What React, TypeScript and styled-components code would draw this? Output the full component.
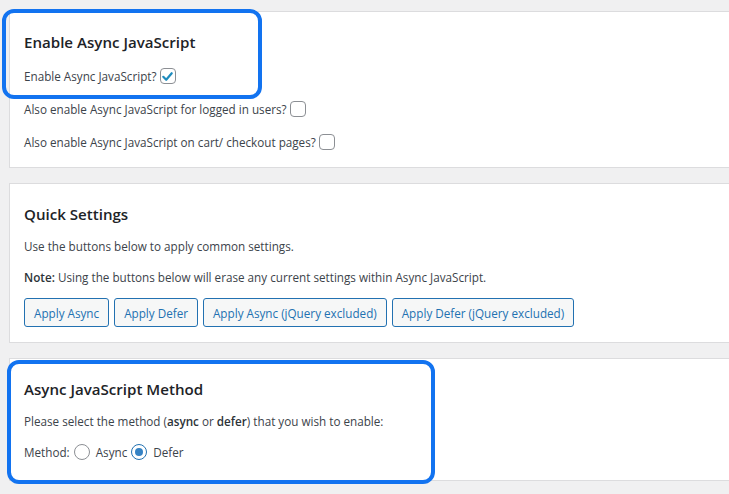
import React from "react";
import styled, { createGlobalStyle } from "styled-components";

const GlobalStyle = createGlobalStyle`
  html, body {
    margin: 0;
    padding: 0;
    background: #f0f0f1;
  }
  body {
    font-family: "Open Sans", "Noto Sans", sans-serif;
    color: #3c434a;
  }
`;

const Page = styled.div`
  padding: 11px 0 0 9px;
  display: flex;
  flex-direction: column;
  gap: 15px;
  overflow: hidden;
  min-height: 494px;
  box-sizing: border-box;
`;

const Panel = styled.section<{ $gap: number; $bottom: number }>`
  position: relative;
  background: #fff;
  border: 1px solid #dcdcde;
  border-right: none;
  padding: 19px 0 ${(p) => p.$bottom}px 14px;
  display: flex;
  flex-direction: column;
  gap: ${(p) => p.$gap}px;
`;

const Title = styled.h2`
  margin: 0;
  font-size: 15.1px;
  line-height: 22px;
  font-weight: 600;
  color: #1d2327;
`;

const Text = styled.p`
  margin: 0;
  font-size: 11.7px;
  line-height: 20px;
  white-space: nowrap;
  b {
    font-weight: 600;
    color: #2c3338;
  }
`;

const Row = styled.label`
  display: flex;
  align-items: center;
  font-size: 11.7px;
  line-height: 20px;
  white-space: nowrap;
`;

const Box = styled.span`
  width: 16px;
  height: 16px;
  margin-left: 3px;
  border: 1px solid #8c8f94;
  border-radius: 4px;
  box-sizing: border-box;
  display: inline-flex;
  align-items: center;
  justify-content: center;
  svg {
    width: 13px;
    height: 13px;
  }
`;

const Radio = styled.span<{ $checked?: boolean }>`
  width: 16px;
  height: 16px;
  margin: 0 6px 0 4px;
  border: 1px solid ${(p) => (p.$checked ? "#2271b1" : "#8c8f94")};
  border-radius: 50%;
  box-sizing: border-box;
  display: inline-flex;
  align-items: center;
  justify-content: center;
  &::after {
    content: "";
    display: ${(p) => (p.$checked ? "block" : "none")};
    width: 8px;
    height: 8px;
    border-radius: 50%;
    background: #3582c4;
  }
`;

const Buttons = styled.div`
  display: flex;
  gap: 5px;
`;

const Button = styled.button`
  font-family: inherit;
  font-size: 11.7px;
  height: 29px;
  padding: 0 9px;
  color: #2271b1;
  background: #f6f7f7;
  border: 1px solid #2271b1;
  border-radius: 3px;
  white-space: nowrap;
`;

const Group = styled.div`
  position: relative;
  display: flex;
  flex-direction: column;
  gap: 13px;
`;

const Highlight = styled.div<{ $top: number; $left: number; $width: number; $height: number }>`
  position: absolute;
  top: ${(p) => p.$top}px;
  left: ${(p) => p.$left}px;
  width: ${(p) => p.$width}px;
  height: ${(p) => p.$height}px;
  border: 4px solid #1273f0;
  border-radius: 12px;
  box-sizing: border-box;
  pointer-events: none;
`;

const Check = () => (
  <svg viewBox="0 0 20 20">
    <path d="M3.5 10.5l4.5 4.5 8.5-10" fill="none" stroke="#1e8cbe" strokeWidth="3.4" strokeLinecap="round" strokeLinejoin="round" />
  </svg>
);

export default function App() {
  return (
    <>
      <GlobalStyle />
      <Page>
        <Panel $gap={13} $bottom={15}>
          <Group>
            <Title>Enable Async JavaScript</Title>
            <Row>
              Enable Async JavaScript?
              <Box>
                <Check />
              </Box>
            </Row>
            <Highlight $top={-22} $left={-22} $width={260} $height={90} />
          </Group>
          <Row>
            Also enable Async JavaScript for logged in users?
            <Box />
          </Row>
          <Row>
            Also enable Async JavaScript on cart/ checkout pages?
            <Box />
          </Row>
        </Panel>

        <Panel $gap={11} $bottom={15}>
          <Title>Quick Settings</Title>
          <Text>Use the buttons below to apply common settings.</Text>
          <Text>
            <b>Note:</b> Using the buttons below will erase any current settings within Async JavaScript.
          </Text>
          <Buttons>
            <Button>Apply Async</Button>
            <Button>Apply Defer</Button>
            <Button>Apply Async (jQuery excluded)</Button>
            <Button>Apply Defer (jQuery excluded)</Button>
          </Buttons>
        </Panel>

        <Panel $gap={11} $bottom={18}>
          <Title>Async JavaScript Method</Title>
          <Text>
            Please select the method (<b>async</b> or <b>defer</b>) that you wish to enable:
          </Text>
          <Row>
            Method:
            <Radio />
            Async
            <Radio $checked />
            Defer
          </Row>
          <Highlight $top={1} $left={-3} $width={428} $height={124} />
        </Panel>
      </Page>
    </>
  );
}
